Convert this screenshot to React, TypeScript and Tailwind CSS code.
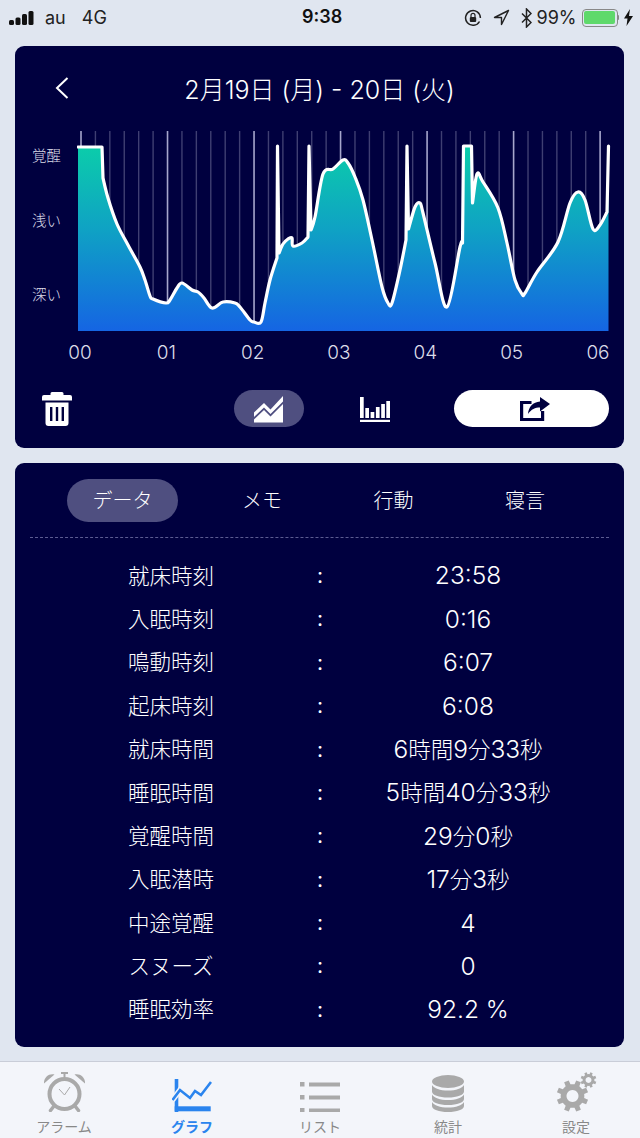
import React from 'react';

const FONT = { fontFamily: '"Inter", "Noto Sans CJK JP", sans-serif' };

// sleep curve in page coords, shifted to the chart svg (origin 77,131)
const RAW: [number, number][] = [
  [78, 147], [102, 147], [103, 178], [108, 198], [117, 224], [128, 245], [140, 267], [145, 280], [150, 296], [153, 299],
  [166, 303], [170, 300], [177, 288], [182, 283], [192, 290], [198, 292], [204, 298], [212, 308], [223, 302], [235, 303],
  [240, 307], [250, 320], [254, 322], [261, 322], [265, 303], [270, 280], [277, 258], [277.5, 146], [279, 253], [283, 244],
  [288, 239], [292, 238], [293, 246], [302, 243], [308, 237], [309, 146], [311, 230], [315, 217], [323, 174], [333, 169],
  [343, 160], [348, 163], [355, 177], [363, 200], [372, 240], [382, 287], [388, 303], [392, 303], [400, 270], [406, 240],
  [407, 146], [408.5, 229], [415, 207], [420, 203], [423, 213], [435, 263], [447, 307], [460, 247], [462.5, 243], [463.5, 146],
  [471.5, 146], [472.5, 203], [477, 174], [483, 182], [498, 208], [507, 243], [515, 280], [522, 294], [525, 293], [537, 272],
  [558, 242], [570, 203], [578, 192], [585, 200], [593, 229], [600, 225], [607, 212], [608.5, 146],
];
const CHART = RAW.map(([x, y]) => [x - 77, y - 131]);
const isSpike = (p?: number[]) => !p || p[1] <= 16;

// catmull-rom between normal points, straight lines into and out of the spikes
const buildCurve = () => {
  let d = `M${CHART[0][0]} ${CHART[0][1]}`;
  for (let i = 1; i < CHART.length; i++) {
    const a = CHART[i - 1];
    const b = CHART[i];
    if (isSpike(a) || isSpike(b)) {
      d += `L${b[0]} ${b[1]}`;
      continue;
    }
    const p0 = isSpike(CHART[i - 2]) ? a : CHART[i - 2];
    const p3 = isSpike(CHART[i + 1]) ? b : CHART[i + 1];
    const c1 = [a[0] + (b[0] - p0[0]) / 6, a[1] + (b[1] - p0[1]) / 6];
    const c2 = [b[0] - (p3[0] - a[0]) / 6, b[1] - (p3[1] - a[1]) / 6];
    d += `C${c1[0].toFixed(1)} ${c1[1].toFixed(1)} ${c2[0].toFixed(1)} ${c2[1].toFixed(1)} ${b[0]} ${b[1]}`;
  }
  return d;
};
const CURVE = buildCurve();
const GRID = Array.from({ length: 37 }, (_, i) => ({ x: 4 + i * 14.42, major: i % 6 === 0 }));

const gearPath = (cx: number, cy: number, r: number, teeth: number) => {
  let d = '';
  const step = (Math.PI * 2) / teeth;
  for (let i = 0; i < teeth; i++) {
    const a = i * step + step / 2;
    const pts = [
      [a - step * 0.5, r * 0.74],
      [a - step * 0.28, r * 0.74],
      [a - step * 0.2, r],
      [a + step * 0.2, r],
      [a + step * 0.28, r * 0.74],
    ];
    pts.forEach(([an, ra]) => {
      d += `${d ? 'L' : 'M'}${(cx + Math.cos(an) * ra).toFixed(2)} ${(cy + Math.sin(an) * ra).toFixed(2)}`;
    });
  }
  return d + 'Z';
};

const StatusBar = () => (
  <div className="relative flex h-[34px] items-center justify-between pl-[9px] pr-[7px] pt-[1px] text-[18px] text-[#222]">
    <div className="flex items-center">
      <svg width="26" height="14" viewBox="0 0 26 14" fill="#111">
        <rect x="0" y="9" width="5" height="5" rx="1.5" />
        <rect x="6.5" y="6.5" width="5" height="7.5" rx="1.5" />
        <rect x="13" y="3" width="5" height="11" rx="1.5" />
        <rect x="19.5" y="0" width="5" height="14" rx="1.5" />
      </svg>
      <span className="ml-[10px]">au</span>
      <span className="ml-[16px]">4G</span>
    </div>
    <span className="absolute left-[302px] top-[3px] text-[18px] font-semibold text-[#111]">9:38</span>
    <div className="flex items-center">
      <svg width="18" height="18" viewBox="0 0 18 18" fill="none" stroke="#222" strokeWidth="1.5">
        <path d="M15.5 12.5A7.4 7.4 0 1 1 16.4 9" />
        <rect x="5.8" y="8" width="6.4" height="5" rx="1" fill="#222" stroke="none" />
        <path d="M7 8V6.4a2 2 0 0 1 4 0V8" strokeWidth="1.2" />
      </svg>
      <svg className="ml-[11px]" width="17" height="17" viewBox="0 0 17 17" fill="none" stroke="#222" strokeWidth="1.4" strokeLinejoin="round">
        <path d="M15.5 1.5L1.5 8.5h7v7z" />
      </svg>
      <svg className="ml-[11px]" width="11" height="20" viewBox="0 0 11 20" fill="none" stroke="#222" strokeWidth="1.5">
        <path d="M1 5.5l9 9-4.5 4.5V1L10 5.5l-9 9" />
      </svg>
      <span className="ml-[5px]">99%</span>
      <div className="ml-[5px] flex h-[18px] w-[36px] items-center rounded-[4px] border border-[#888] p-[1.5px]">
        <div className="h-full w-full rounded-[2px] bg-[#5fd96b]" />
      </div>
      <div className="h-[5px] w-[1.5px] rounded-r bg-[#888]" />
      <svg className="ml-[5px]" width="9" height="17" viewBox="0 0 9 17" fill="#111">
        <path d="M6 0L0 9.5h3.5L2.5 17 9 7H5z" />
      </svg>
    </div>
  </div>
);

const SleepChart = () => (
  <svg width="536" height="204" viewBox="0 0 536 204" className="block">
    <defs>
      <linearGradient id="area" x1="0" y1="0" x2="0" y2="1">
        <stop offset="0" stopColor="#0bcdaa" />
        <stop offset="0.45" stopColor="#0fa2c4" />
        <stop offset="1" stopColor="#1565e3" />
      </linearGradient>
    </defs>
    {GRID.map((g) => (
      <line
        key={g.x}
        x1={g.x}
        x2={g.x}
        y1={0}
        y2={200}
        stroke={g.major ? '#a6a6cc' : '#3f3f72'}
        strokeWidth={g.major ? 1.6 : 1.4}
      />
    ))}
    <path d={`M1 200L1 16 ${CURVE.slice(1)}L531.5 200Z`} fill="url(#area)" />
    <path d={CURVE} fill="none" stroke="#fff" strokeWidth="3.2" strokeLinejoin="round" strokeLinecap="round" />
  </svg>
);

const TrashIcon = () => (
  <svg width="30" height="34" viewBox="0 0 30 34" fill="#fff">
    <path d="M10 0h10a1.5 1.5 0 0 1 1.5 1.5V3H28a2 2 0 0 1 2 2v3.5H0V5a2 2 0 0 1 2-2h6.5V1.5A1.5 1.5 0 0 1 10 0z" />
    <path fillRule="evenodd" d="M3.5 10.5h23V31a3 3 0 0 1-3 3h-17a3 3 0 0 1-3-3zM8 15v14h2.4V15zM13.8 15v14h2.4V15zM19.6 15v14H22V15z" />
  </svg>
);

const AreaIcon = () => (
  <svg width="30" height="28" viewBox="0 0 30 28" fill="#fff">
    <path d="M0 17.5L10 8l6.5 6.5L29 1v5.5L16.5 19 10 12.5 0 22z" />
    <path d="M0 24.5L10 15l6.5 6.5L29 9v18.5H0z" />
  </svg>
);

const BarsIcon = () => (
  <svg width="30" height="25" viewBox="0 0 30 25" fill="#fff">
    <rect x="0" y="0" width="3.7" height="21" />
    <rect x="5.3" y="11" width="3.7" height="10" />
    <rect x="10.6" y="15" width="3.7" height="6" />
    <rect x="15.9" y="10" width="3.7" height="11" />
    <rect x="21.2" y="7" width="3.7" height="14" />
    <rect x="26.3" y="4" width="3.7" height="17" />
    <rect x="0" y="22.8" width="30" height="2.2" />
  </svg>
);

const ShareIcon = () => (
  <svg width="30" height="24" viewBox="0 0 30 24" fill="#00003f">
    <path d="M0 4h11.5v3H3.2v14h17.800v-7h3.200v10H0z" />
    <path d="M20 0l10 7-10 7.500V10.500c-5 0-8.500 1.500-12 6.500.5-7 5-12 12-12.500z" />
  </svg>
);

const AlarmIcon = () => (
  <svg width="41" height="40" viewBox="0 0 41 40" fill="none" stroke="#a9a9a9">
    <circle cx="20.5" cy="22" r="15" strokeWidth="4" />
    <path d="M0 11.5C-.5 6 4.5 1 10.5 2.5z" fill="#a9a9a9" stroke="none" />
    <path d="M41 11.5C41.5 6 36.5 1 30.5 2.5z" fill="#a9a9a9" stroke="none" />
    <path d="M20.5 5V1M17 1h7" strokeWidth="2" />
    <path d="M10 34l-3.5 4.5M31 34l3.5 4.5" strokeWidth="3.5" strokeLinecap="round" />
    <path d="M15 17l5.5 6 5.500-8" strokeWidth="1" />
  </svg>
);

const GraphIcon = () => (
  <svg width="40" height="33" viewBox="0 0 40 33" fill="none">
    <path d="M4.5 0v33" stroke="#2a84ee" strokeWidth="3.6" />
    <rect x="2.7" y="27.3" width="36" height="5" fill="#2a84ee" />
    <path d="M0.5 21L8 11l10 8 5-7 6 4L39 3" stroke="#f3f5fa" strokeWidth="5.5" />
    <path d="M0.5 21L8 11l10 8 5-7 6 4L39 3" stroke="#2a84ee" strokeWidth="2.6" />
  </svg>
);

const ListIcon = () => (
  <svg width="40" height="30" viewBox="0 0 40 30" fill="#a9a9a9">
    <rect x="0" y="0" width="4.5" height="4.5" />
    <rect x="9" y="0.5" width="31" height="4" />
    <rect x="0" y="13" width="4.5" height="4.5" />
    <rect x="9" y="13.5" width="31" height="4" />
    <rect x="0" y="26" width="4.5" height="4.5" />
    <rect x="9" y="26.5" width="31" height="4" />
  </svg>
);

const DbIcon = () => (
  <svg width="32" height="37" viewBox="0 0 32 37" fill="#a9a9a9">
    <ellipse cx="16" cy="6.5" rx="16" ry="6.5" />
    <path d="M0 10c2 3.5 8 5.5 16 5.5S30 13.5 32 10v6.5c0 3.5-7 6-16 6s-16-2.500-16-6z" />
    <path d="M0 19.5c2 3.5 8 5.5 16 5.5s14-2 16-5.5V24c0 3.5-7 6-16 6S0 27.5 0 24z" />
    <path d="M0 27c2 3.5 8 5.5 16 5.5s14-2 16-5.5v4c0 3.5-7 6-16 6S0 34.5 0 31z" />
  </svg>
);

const GearsIcon = () => (
  <svg width="41" height="40" viewBox="0 0 41 40" fill="#a9a9a9">
    <path fillRule="evenodd" d={`${gearPath(16.5, 24, 16, 8)} M16.5 18a6 6 0 1 0 0.01 0z`} />
    <path fillRule="evenodd" d={`${gearPath(32.5, 8, 8, 8)} M32.5 5a3 3 0 1 0 0.01 0z`} />
  </svg>
);

const tabs = [
  { label: 'アラーム', icon: <AlarmIcon />, active: false },
  { label: 'グラフ', icon: <GraphIcon />, active: true },
  { label: 'リスト', icon: <ListIcon />, active: false },
  { label: '統計', icon: <DbIcon />, active: false },
  { label: '設定', icon: <GearsIcon />, active: false },
];

const rows = [
  ['就床時刻', '23:58'],
  ['入眠時刻', '0:16'],
  ['鳴動時刻', '6:07'],
  ['起床時刻', '6:08'],
  ['就床時間', '6時間9分33秒'],
  ['睡眠時間', '5時間40分33秒'],
  ['覚醒時間', '29分0秒'],
  ['入眠潜時', '17分3秒'],
  ['中途覚醒', '4'],
  ['スヌーズ', '0'],
  ['睡眠効率', '92.2 %'],
];

// digits run larger than the kanji in the values column
const Value = ({ text }: { text: string }) => (
  <>
    {text.split(/([時間分秒]+)/).map((part, i) =>
      /[時間分秒]/.test(part) ? (
        <span key={i} className="text-[22.5px]">{part}</span>
      ) : (
        <span key={i}>{part}</span>
      ),
    )}
  </>
);

export default function App() {
  return (
    <div className="flex h-[1138px] w-[640px] flex-col overflow-hidden bg-[#e0e6f0]" style={FONT}>
      <StatusBar />

      {/* Graph card */}
      <div className="mx-[15px] mt-[12px] h-[402px] w-[609px] rounded-[9px] bg-[#00003f] text-white">
        <div className="relative flex h-[85px] items-center justify-center pt-[5px] text-[25px] font-light">
          <svg className="absolute left-[40px] top-[31px]" width="14" height="22" viewBox="0 0 14 22" fill="none" stroke="#fff" strokeWidth="2">
            <path d="M12.5 1L2 11l10.5 10" />
          </svg>
          <span>2月19日 (月) - 20日 (火)</span>
        </div>

        <div className="flex h-[204px]">
          <div className="w-[62px] pl-[17px] text-[14.5px] font-light leading-[20px] text-[#dcdce8]">
            <div className="mt-[15px]">覚醒</div>
            <div className="mt-[45px]">浅い</div>
            <div className="mt-[54px]">深い</div>
          </div>
          <SleepChart />
        </div>

        <div className="mt-[6px] flex w-[601px] justify-between pl-[47px] text-[19px] font-light leading-[24px] text-[#dcdce8]">
          {['00', '01', '02', '03', '04', '05', '06'].map((h) => (
            <span key={h} className="w-[36px] text-center">{h}</span>
          ))}
        </div>

        <div className="mt-[25px] flex h-[37px] items-center">
          <div className="ml-[27px]"><TrashIcon /></div>
          <div className="ml-[162px] flex h-[37px] w-[70px] items-center justify-center rounded-full bg-[#4f4f80]">
            <AreaIcon />
          </div>
          <div className="ml-[56px] pt-[2px]"><BarsIcon /></div>
          <div className="ml-[64px] flex h-[37px] w-[155px] items-center justify-center rounded-full bg-white pl-[6px]">
            <ShareIcon />
          </div>
        </div>
      </div>

      {/* Data card */}
      <div className="mx-[15px] mt-[15px] h-[584px] w-[609px] rounded-[9px] bg-[#00003f] text-white">
        <div className="flex items-center pl-[52px] pt-[16px] text-[20px] font-light">
          <div className="flex h-[43px] w-[111px] items-center justify-center rounded-full bg-[#4f4f80]">データ</div>
          <div className="ml-[18px] w-[132px] text-center">メモ</div>
          <div className="w-[131px] text-center">行動</div>
          <div className="w-[132px] text-center">寝言</div>
        </div>
        <div className="mx-[15px] mt-[15px] border-t border-dashed border-[#5c5c92]" />
        <div className="mt-[16px] flex flex-col pl-[56px] font-light text-white">
          {rows.map(([label, value]) => (
            <div key={label} className="flex h-[43.4px] items-center">
              <span className="w-[200px] text-center text-[21.5px]">{label}</span>
              <span className="w-[98px] text-center text-[21px] font-normal">:</span>
              <span className="w-[198px] text-center text-[24.5px] leading-none"><Value text={value} /></span>
            </div>
          ))}
        </div>
      </div>

      {/* Tab bar */}
      <div className="mt-[14px] flex h-[77px] border-t border-[#c9cdd8] bg-[#f3f5fa]">
        {tabs.map((t) => (
          <div key={t.label} className="flex w-[128px] flex-col items-center">
            <div className="flex h-[50px] items-end">{t.icon}</div>
            <span className={`mt-[6px] text-[14px] leading-[18px] ${t.active ? 'font-semibold text-[#2a84ee]' : 'text-[#888]'}`}>
              {t.label}
            </span>
          </div>
        ))}
      </div>
    </div>
  );
}
